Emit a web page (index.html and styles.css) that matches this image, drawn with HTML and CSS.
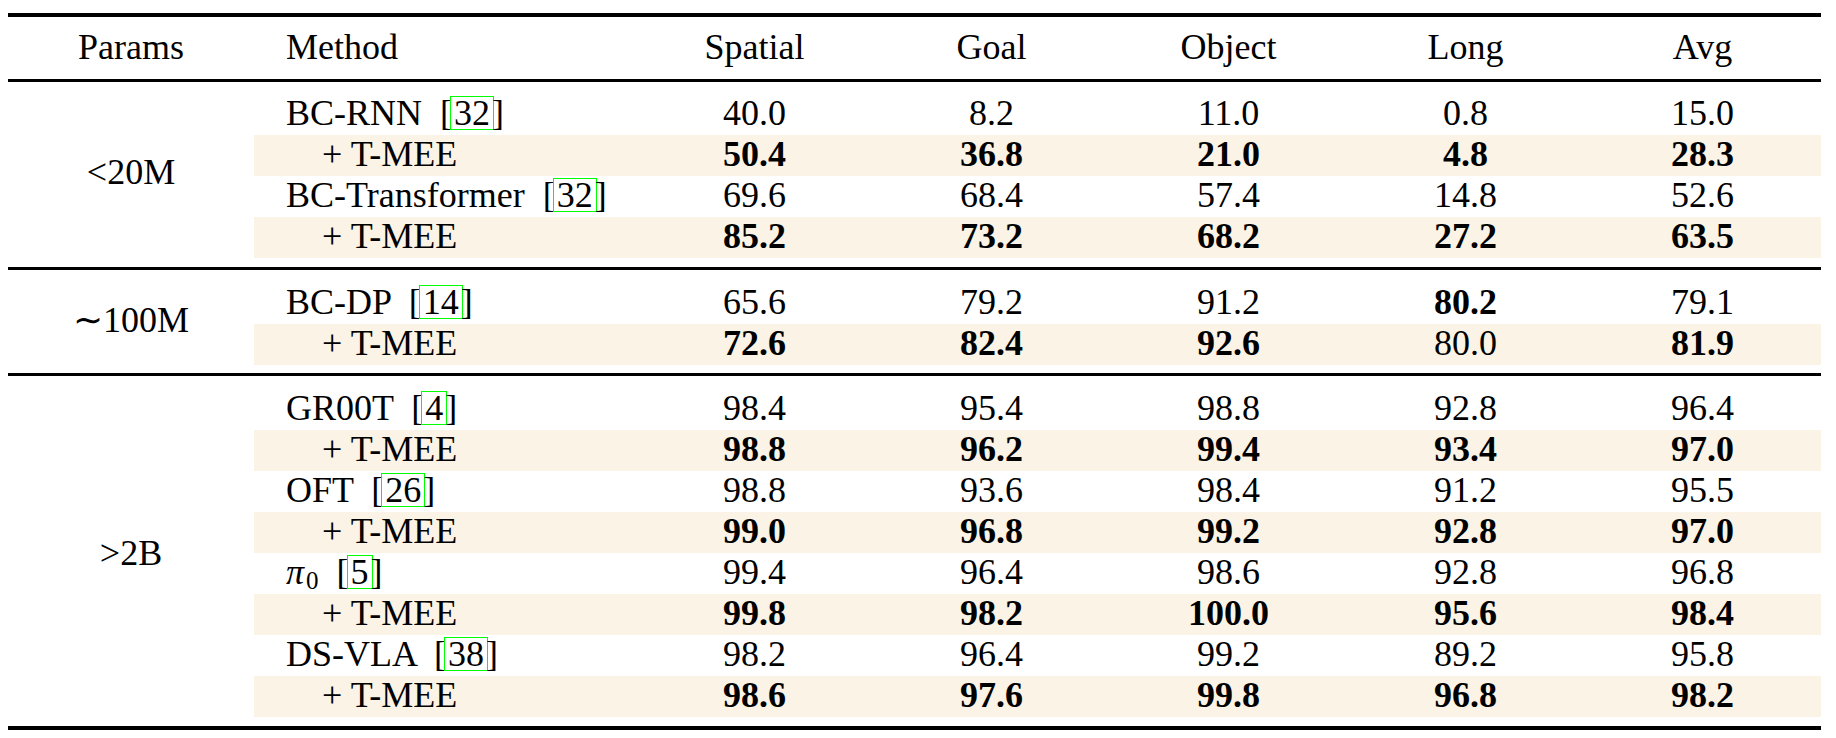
FILE: index.html
```html
<!DOCTYPE html>
<html>
<head>
<meta charset="utf-8">
<link rel="stylesheet" href="styles.css">
</head>
<body>
<div class="table">
  <div class="rule rule-top"></div>
  <div class="head">
    <div class="h-params">Params</div>
    <div class="h-method">Method</div>
    <div class="num">Spatial</div>
    <div class="num">Goal</div>
    <div class="num">Object</div>
    <div class="num">Long</div>
    <div class="num">Avg</div>
  </div>
  <div class="rule rule-mid"></div>

  <div class="section s1">
    <div class="params">&lt;20M</div>
    <div class="rows">
      <div class="row">
        <div class="method">BC-RNN <span class="cite">[<span class="ref">32</span>]</span></div>
        <div class="num">40.0</div><div class="num">8.2</div><div class="num">11.0</div><div class="num">0.8</div><div class="num">15.0</div>
      </div>
      <div class="row ours">
        <div class="method">+ T-MEE</div>
        <div class="num b">50.4</div><div class="num b">36.8</div><div class="num b">21.0</div><div class="num b">4.8</div><div class="num b">28.3</div>
      </div>
      <div class="row">
        <div class="method">BC-Transformer <span class="cite">[<span class="ref">32</span>]</span></div>
        <div class="num">69.6</div><div class="num">68.4</div><div class="num">57.4</div><div class="num">14.8</div><div class="num">52.6</div>
      </div>
      <div class="row ours">
        <div class="method">+ T-MEE</div>
        <div class="num b">85.2</div><div class="num b">73.2</div><div class="num b">68.2</div><div class="num b">27.2</div><div class="num b">63.5</div>
      </div>
    </div>
  </div>
  <div class="rule rule-mid"></div>

  <div class="section s2">
    <div class="params">&#8764;100M</div>
    <div class="rows">
      <div class="row">
        <div class="method">BC-DP <span class="cite">[<span class="ref">14</span>]</span></div>
        <div class="num">65.6</div><div class="num">79.2</div><div class="num">91.2</div><div class="num b">80.2</div><div class="num">79.1</div>
      </div>
      <div class="row ours">
        <div class="method">+ T-MEE</div>
        <div class="num b">72.6</div><div class="num b">82.4</div><div class="num b">92.6</div><div class="num">80.0</div><div class="num b">81.9</div>
      </div>
    </div>
  </div>
  <div class="rule rule-mid"></div>

  <div class="section s3">
    <div class="params">&gt;2B</div>
    <div class="rows">
      <div class="row">
        <div class="method">GR00T <span class="cite">[<span class="ref">4</span>]</span></div>
        <div class="num">98.4</div><div class="num">95.4</div><div class="num">98.8</div><div class="num">92.8</div><div class="num">96.4</div>
      </div>
      <div class="row ours">
        <div class="method">+ T-MEE</div>
        <div class="num b">98.8</div><div class="num b">96.2</div><div class="num b">99.4</div><div class="num b">93.4</div><div class="num b">97.0</div>
      </div>
      <div class="row">
        <div class="method">OFT <span class="cite">[<span class="ref">26</span>]</span></div>
        <div class="num">98.8</div><div class="num">93.6</div><div class="num">98.4</div><div class="num">91.2</div><div class="num">95.5</div>
      </div>
      <div class="row ours">
        <div class="method">+ T-MEE</div>
        <div class="num b">99.0</div><div class="num b">96.8</div><div class="num b">99.2</div><div class="num b">92.8</div><div class="num b">97.0</div>
      </div>
      <div class="row">
        <div class="method"><span class="pi">&#960;</span><span class="sub">0</span> <span class="cite">[<span class="ref">5</span>]</span></div>
        <div class="num">99.4</div><div class="num">96.4</div><div class="num">98.6</div><div class="num">92.8</div><div class="num">96.8</div>
      </div>
      <div class="row ours">
        <div class="method">+ T-MEE</div>
        <div class="num b">99.8</div><div class="num b">98.2</div><div class="num b">100.0</div><div class="num b">95.6</div><div class="num b">98.4</div>
      </div>
      <div class="row">
        <div class="method">DS-VLA <span class="cite">[<span class="ref">38</span>]</span></div>
        <div class="num">98.2</div><div class="num">96.4</div><div class="num">99.2</div><div class="num">89.2</div><div class="num">95.8</div>
      </div>
      <div class="row ours">
        <div class="method">+ T-MEE</div>
        <div class="num b">98.6</div><div class="num b">97.6</div><div class="num b">99.8</div><div class="num b">96.8</div><div class="num b">98.2</div>
      </div>
    </div>
  </div>
  <div class="rule rule-bottom"></div>
</div>
</body>
</html>
```

FILE: styles.css
```css
html, body {
  margin: 0;
  padding: 0;
  background: #ffffff;
}

.table {
  margin: 13px 0 0 8px;
  width: 1813px;
  font-family: "Liberation Serif", "Times New Roman", serif;
  font-size: 36px;
  color: #000000;
}

.rule {
  background: #000000;
}

.rule-top {
  height: 4px;
}

.rule-mid {
  height: 3px;
}

.rule-bottom {
  height: 4px;
}

.head {
  display: grid;
  grid-template-columns: 246px 382px repeat(5, 237px);
  padding: 11px 0 13px;
  line-height: 38px;
}

.h-params {
  text-align: center;
}

.h-method {
  padding-left: 32px;
}

.num {
  text-align: center;
}

.b {
  font-weight: bold;
}

.section {
  display: flex;
}

.s1 {
  padding: 12px 0 9px;
}

.s2 {
  padding: 13px 0 8px;
}

.s3 {
  padding: 13px 0 9px;
}

.params {
  width: 246px;
  flex: none;
  display: flex;
  align-items: center;
  justify-content: center;
  line-height: 38px;
}

.s1 .params,
.s2 .params {
  padding-bottom: 8px;
}

.rows {
  flex: 1;
}

.row {
  display: grid;
  grid-template-columns: 382px repeat(5, 237px);
  height: 41px;
  line-height: 38px;
}

.row.ours {
  background: #faf3e6;
}

.method {
  padding-left: 32px;
  white-space: nowrap;
}

.row.ours .method {
  padding-left: 68px;
}

.cite {
  margin-left: 9px;
}

.ref {
  display: inline-block;
  border: 1px solid #00ff00;
  height: 32px;
  line-height: 32px;
  padding: 0 3px;
  margin: 0 -2px;
}

.pi {
  font-style: italic;
}

.sub {
  font-size: 25px;
  position: relative;
  top: 5px;
  margin-left: 2px;
}
```
